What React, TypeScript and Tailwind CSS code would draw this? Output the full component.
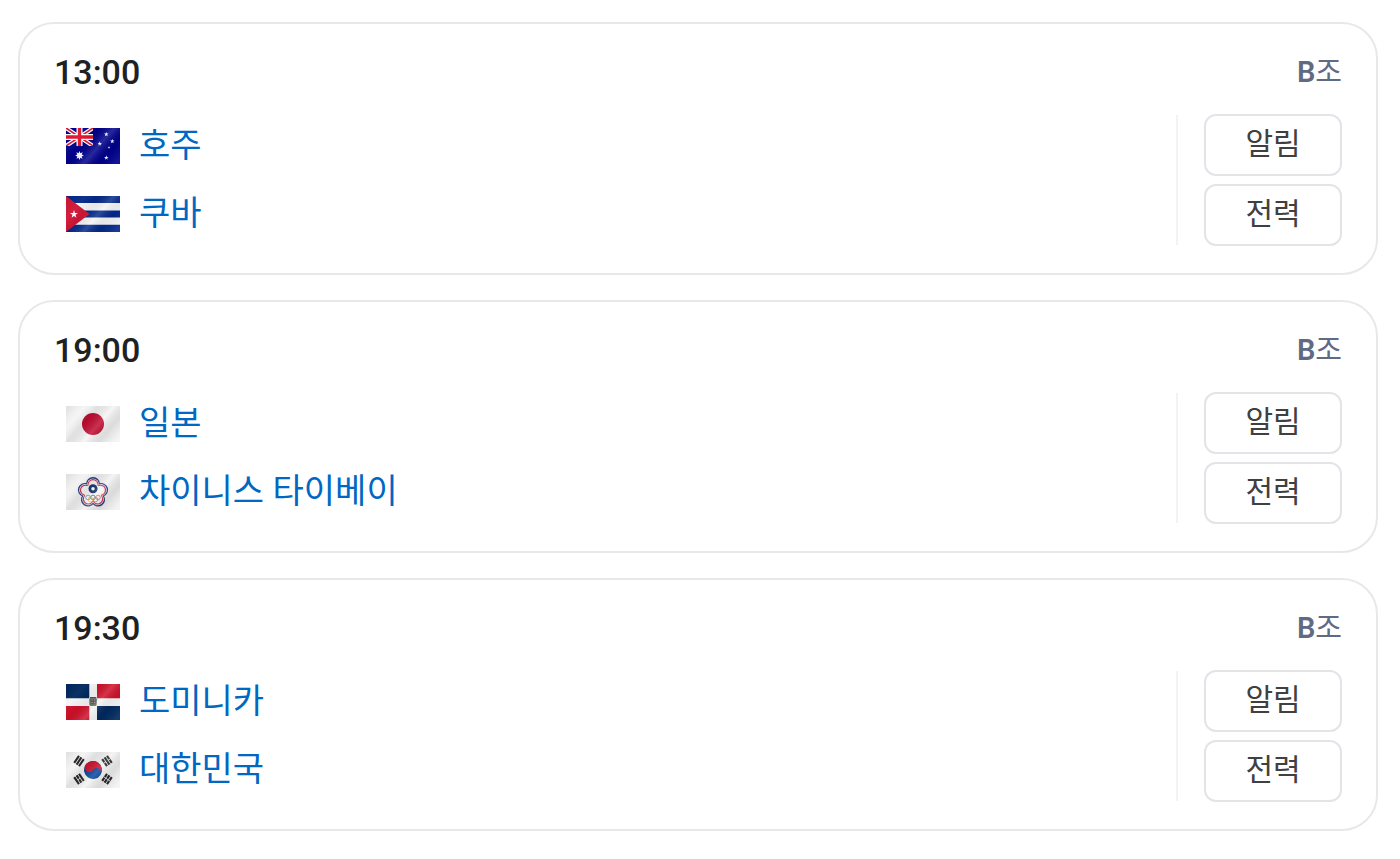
import type { ReactNode } from 'react';

type Team = { name: string; flag: ReactNode };
type Game = { time: string; group: string; teams: Team[] };

const STAR = '0,-1 0.23,-0.31 0.95,-0.31 0.36,0.12 0.59,0.81 0,0.38 -0.59,0.81 -0.36,0.12 -0.95,-0.31 -0.23,-0.31';

function Flag({ id, soft, children }: { id: string; soft?: boolean; children: ReactNode }) {
  return (
    <svg viewBox="0 0 54 36" className="w-[54px] h-9 shrink-0" aria-hidden="true">
      <defs>
        <linearGradient id={`${id}-wave`} gradientUnits="userSpaceOnUse" x1="2" y1="2" x2="46" y2="40">
          <stop offset="0" stopColor="#000" stopOpacity={soft ? 0.07 : 0.02} />
          <stop offset="0.2" stopColor="#fff" stopOpacity="0.04" />
          <stop offset="0.36" stopColor="#000" stopOpacity={soft ? 0.08 : 0.04} />
          <stop offset="0.58" stopColor="#fff" stopOpacity="0.16" />
          <stop offset="0.78" stopColor="#000" stopOpacity={soft ? 0.1 : 0.05} />
          <stop offset="1" stopColor="#fff" stopOpacity="0.08" />
        </linearGradient>
      </defs>
      {children}
      <path d="M0 0h54v36H0z" fill={`url(#${id}-wave)`} />
    </svg>
  );
}

function AustraliaFlag() {
  return (
    <Flag id="au">
      <path d="M0 0h54v36H0z" fill="#00008b" />
      <svg x="0" y="0" width="27" height="18" viewBox="0 0 27 18">
        <path d="M0 0 27 18M27 0 0 18" stroke="#fff" strokeWidth="4" />
        <path d="M0 0 27 18M27 0 0 18" stroke="#e1142c" strokeWidth="1.6" />
        <path d="M13.5 0v18M0 9h27" stroke="#fff" strokeWidth="6" />
        <path d="M13.5 0v18M0 9h27" stroke="#e1142c" strokeWidth="3.4" />
      </svg>
      <g fill="#fff">
        <path d="m13.5 23 .9 2.3 2.3-1-1 2.3 2.2 1-2.3.9.9 2.2-2.2-1-.8 2.2-.9-2.2-2.2 1 1-2.2-2.3-.9 2.2-1-1-2.3 2.3 1z" />
        <polygon points={STAR} transform="translate(40.3 6.3) scale(2.4)" />
        <polygon points={STAR} transform="translate(46.3 13.3) scale(2.4)" />
        <polygon points={STAR} transform="translate(33.7 15.7) scale(2.4)" />
        <polygon points={STAR} transform="translate(40.3 29.7) scale(2.4)" />
        <polygon points={STAR} transform="translate(43 19.4) scale(1.4)" />
      </g>
    </Flag>
  );
}

function CubaFlag() {
  return (
    <Flag id="cu">
      <path d="M0 0h54v36H0z" fill="#f4f4f6" />
      <path d="M0 0h54v7H0zM0 14.4h54v7.2H0zM0 28.8h54V36H0z" fill="#04298a" />
      <path d="M0 0l23.5 18L0 36z" fill="#d01636" />
      <polygon points={STAR} transform="translate(8 18.3) scale(4.2)" fill="#fff" />
    </Flag>
  );
}

function JapanFlag() {
  return (
    <Flag id="jp" soft>
      <path d="M0 0h54v36H0z" fill="#f4f4f4" />
      <circle cx="27" cy="18" r="11" fill="#c10b2f" />
    </Flag>
  );
}

function TaipeiFlag() {
  const petals = [0, 72, 144, 216, 288];
  return (
    <Flag id="tpe" soft>
      <path d="M0 0h54v36H0z" fill="#f2f2f2" />
      <g transform="translate(27 18.6)">
        <g fill="#263c80">
          {petals.map((a) => <circle key={a} cy="-8.6" r="7" transform={`rotate(${a})`} />)}
        </g>
        <g fill="#f6f2f4">
          {petals.map((a) => <circle key={a} cy="-8.3" r="5.9" transform={`rotate(${a})`} />)}
        </g>
        <g fill="#c9304d">
          {petals.map((a) => <circle key={a} cy="-8.1" r="5.4" transform={`rotate(${a})`} />)}
        </g>
        <g fill="#f8f7f8">
          {petals.map((a) => <circle key={a} cy="-7.8" r="4.5" transform={`rotate(${a})`} />)}
          <circle r="8.5" />
        </g>
      </g>
      <circle cx="27" cy="14.7" r="4.5" fill="#13306f" />
      <circle cx="27" cy="14.7" r="1.8" fill="#fff" />
      <g fill="none" strokeWidth="0.7">
        <circle cx="22" cy="23.5" r="2.3" stroke="#4089bd" />
        <circle cx="27" cy="23.5" r="2.3" stroke="#404040" />
        <circle cx="32" cy="23.5" r="2.3" stroke="#d24a55" />
        <circle cx="24.5" cy="25.5" r="2.3" stroke="#d7ae3d" />
        <circle cx="29.5" cy="25.5" r="2.3" stroke="#4b9e63" />
      </g>
    </Flag>
  );
}

function DominicanFlag() {
  return (
    <Flag id="do">
      <path d="M0 0h54v36H0z" fill="#f5f5f5" />
      <path d="M0 0h23.3v14.3H0zM31 22h23v14H31z" fill="#00295e" />
      <path d="M31 0h23v14.3H31zM0 22h23.3v14H0z" fill="#ce1029" />
      {/* Coat of arms */}
      <path d="M23.3 15l1.5-1.8h4.6L31 15l-.3 5.6-1.2 1.4h-5l-1.2-1.4z" fill="#5d7563" />
      <path d="M24.8 15.2h4.6v5h-4.6z" fill="#4a4a5a" />
      <path d="M25.4 16h1.2M27.8 16h1.2M25.4 18.6h1.2M27.8 18.6h1.2" stroke="#c0a0a0" />
      <path d="M24 13.5h6.3" stroke="#334a80" strokeWidth="0.9" />
      <path d="M24 21.4h6.3" stroke="#a8505a" strokeWidth="0.9" />
    </Flag>
  );
}

function Trigram({ x, y, angle, split }: { x: number; y: number; angle: number; split?: string }) {
  return (
    <g transform={`translate(${x} ${y}) rotate(${angle})`}>
      <path d="M-4.3-2.9h8.6M-4.3 0h8.6M-4.3 2.9h8.6" stroke="#222" strokeWidth="2.1" />
      {split && <path d={split} stroke="#f2f2f2" strokeWidth="0.8" />}
    </g>
  );
}

function KoreaFlag() {
  return (
    <Flag id="kr" soft>
      <path d="M0 0h54v36H0z" fill="#f3f3f3" />
      <g transform="translate(27 18) rotate(33)">
        <circle r="9" fill="#07459b" />
        <path d="M-9 0a9 9 0 0 1 18 0a4.5 4.5 0 0 0-9 0a4.5 4.5 0 0 1-9 0z" fill="#d1152e" />
      </g>
      <Trigram x={13} y={9} angle={-56} />
      <Trigram x={41} y={27} angle={-56} split="M0-4v8" />
      <Trigram x={41} y={9} angle={56} split="M0-4v2.6M0 1.4v2.6" />
      <Trigram x={13} y={27} angle={56} split="M0-1.3v2.6" />
    </Flag>
  );
}

const games: Game[] = [
  {
    time: '13:00',
    group: 'B',
    teams: [
      { name: '호주', flag: <AustraliaFlag /> },
      { name: '쿠바', flag: <CubaFlag /> },
    ],
  },
  {
    time: '19:00',
    group: 'B',
    teams: [
      { name: '일본', flag: <JapanFlag /> },
      { name: '차이니스 타이베이', flag: <TaipeiFlag /> },
    ],
  },
  {
    time: '19:30',
    group: 'B',
    teams: [
      { name: '도미니카', flag: <DominicanFlag /> },
      { name: '대한민국', flag: <KoreaFlag /> },
    ],
  },
];

function GameCard({ game }: { game: Game }) {
  return (
    <li className="rounded-[36px] border-2 border-[#e8e8e8] px-[34px] pt-6 pb-[25px]">
      {/* Time and group */}
      <div className="flex items-center justify-between h-12 mb-4">
        <h2 className="text-[34px] leading-[48px] font-medium text-[#202122]">
          <time>{game.time}</time>
        </h2>
        <p className="text-[29px] leading-[48px] text-[#5f6b85]">
          <span className="font-semibold">{game.group}</span>조
        </p>
      </div>

      <div className="flex items-center">
        {/* Teams */}
        <ul className="flex-1 pl-3">
          {game.teams.map((team) => (
            <li key={team.name} className="flex items-center h-[68px] gap-[19px]">
              {team.flag}
              <a href="#" className="text-[34px] leading-[48px] pb-0.5 text-[#0068c3]">{team.name}</a>
            </li>
          ))}
        </ul>

        {/* Actions */}
        <div className="flex items-center border-l-2 border-[#f3f3f4] h-[130px] pl-[26px]">
          <div className="flex flex-col gap-2">
            <button type="button" className="w-[138px] h-[62px] rounded-xl border-2 border-[#e3e4e8] pb-0.5 text-[30px] leading-[48px] text-[#404040]">
              알림
            </button>
            <button type="button" className="w-[138px] h-[62px] rounded-xl border-2 border-[#e3e4e8] pb-0.5 text-[30px] leading-[48px] text-[#404040]">
              전력
            </button>
          </div>
        </div>
      </div>
    </li>
  );
}

export default function App() {
  return (
    <main lang="ko" className="bg-white pl-[18px] pr-[22px] py-[22px] font-[Roboto,'Noto_Sans_CJK_KR',sans-serif]">
      <ul className="flex flex-col gap-[25px]">
        {games.map((game) => (
          <GameCard key={game.time} game={game} />
        ))}
      </ul>
    </main>
  );
}
